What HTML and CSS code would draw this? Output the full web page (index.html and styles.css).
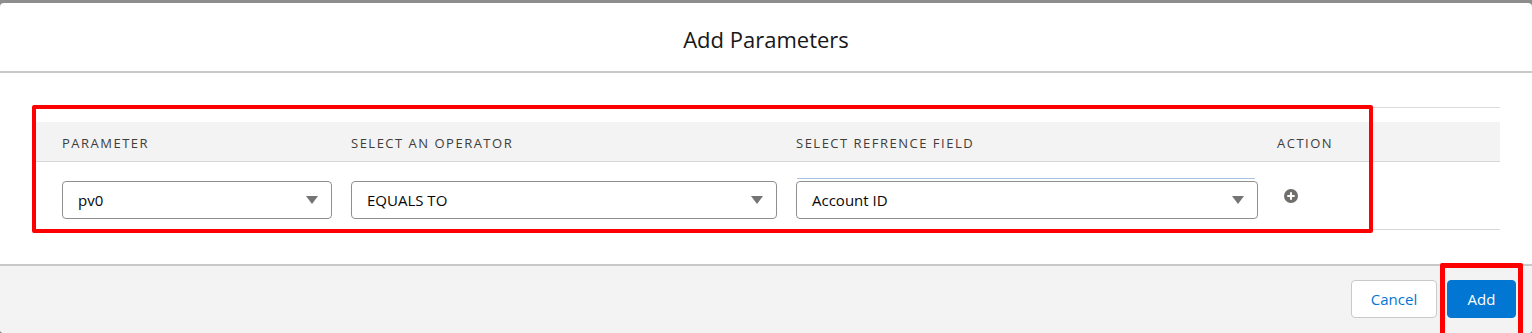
FILE: index.html
```html
<!DOCTYPE html>
<html lang="en">
<head>
    <meta charset="UTF-8">
    <meta name="viewport" content="width=device-width, initial-scale=1.0">
    <title>Add Parameters</title>
    <link rel="stylesheet" href="styles.css">
</head>
<body>
    <div class="modal">
        <div class="modal-header">
            <h2>Add Parameters</h2>
        </div>

        <div class="modal-content">
            <div class="param-table">
                <div class="param-row head">
                    <div class="cell">Parameter</div>
                    <div class="cell">Select an Operator</div>
                    <div class="cell">Select Refrence Field</div>
                    <div class="cell">Action</div>
                </div>
                <div class="param-row body">
                    <div class="field">
                        <div class="select">
                            <span>pv0</span>
                            <svg class="arrow" viewBox="0 0 12 8"><path d="M0 0h12L6 8z"/></svg>
                        </div>
                    </div>
                    <div class="field">
                        <div class="select">
                            <span>EQUALS TO</span>
                            <svg class="arrow" viewBox="0 0 12 8"><path d="M0 0h12L6 8z"/></svg>
                        </div>
                    </div>
                    <div class="field focused">
                        <div class="select">
                            <span>Account ID</span>
                            <svg class="arrow" viewBox="0 0 12 8"><path d="M0 0h12L6 8z"/></svg>
                        </div>
                    </div>
                    <div class="field action">
                        <button class="add-row" title="Add row">
                            <svg viewBox="0 0 14 14">
                                <circle cx="7" cy="7" r="7" fill="#706e6b"/>
                                <path d="M7 3.3v7.4M3.3 7h7.4" stroke="#fff" stroke-width="2"/>
                            </svg>
                        </button>
                    </div>
                </div>
            </div>
        </div>

        <div class="modal-footer">
            <button class="btn btn-neutral">Cancel</button>
            <button class="btn btn-brand">Add</button>
        </div>
    </div>

    <!-- annotation boxes from the screenshot -->
    <div class="mark mark-table"></div>
    <div class="mark mark-add"></div>
</body>
</html>
```

FILE: styles.css
```css
* {
    box-sizing: border-box;
    margin: 0;
    padding: 0;
}
body {
    font-family: 'Open Sans', 'Noto Sans', Arial, sans-serif;
    color: #181818;
    background-color: #8e8e8e;
    padding-top: 3px;
    height: 333px;
    overflow: hidden;
}
.modal {
    background-color: #fff;
    border-radius: 4px;
    height: 330px;
    overflow: hidden;
    display: flex;
    flex-direction: column;
}
.modal-header {
    height: 70px;
    border-bottom: 2px solid #c9c9c9;
    display: flex;
    align-items: center;
    justify-content: center;
}
.modal-header h2 {
    font-size: 22px;
    font-weight: 400;
    color: #181818;
    padding-top: 3px;
}
.modal-content {
    height: 191px;
    padding: 34px 32px 0 36px;
}
.param-table {
    border-top: 1px solid #dddbda;
    padding-top: 14px;
}
.param-row {
    display: grid;
    grid-template-columns: 270px 426px 462px 1fr;
    column-gap: 19px;
    padding-left: 26px;
    border-bottom: 1px solid #d8d8d8;
}
.param-row.head {
    height: 40px;
    background-color: #f3f3f3;
    align-items: center;
}
.param-row.head .cell {
    font-size: 13px;
    letter-spacing: 1.5px;
    text-transform: uppercase;
    color: #3e3e3c;
    padding-top: 2px;
}
.param-row.body {
    height: 68px;
    padding-top: 16px;
}
.field {
    padding-top: 3px;
}
.field.focused {
    padding-top: 0;
}
.field.focused::before {
    content: "";
    display: block;
    height: 1px;
    margin: 0 3px 2px 1px;
    background-color: #a9c4e2;
}
.select {
    height: 38px;
    border: 1px solid #8f8f8f;
    border-radius: 4px;
    background-color: #fff;
    display: flex;
    align-items: center;
    justify-content: space-between;
    padding: 0 13px 0 15px;
    font-size: 15px;
    color: #080707;
}
.arrow {
    width: 12px;
    height: 8px;
    fill: #747474;
}
.field.action {
    padding-top: 4px;
}
.add-row {
    border: none;
    background: none;
    width: 28px;
    height: 28px;
    display: flex;
    align-items: center;
    justify-content: center;
    cursor: pointer;
}
.add-row svg {
    width: 14px;
    height: 14px;
}
.modal-footer {
    flex: 1;
    background-color: #f3f3f3;
    border-top: 2px solid #c9c9c9;
    display: flex;
    justify-content: flex-end;
    align-items: flex-start;
    gap: 10px;
    padding: 14px 16px 0 0;
}
.btn {
    height: 38px;
    border-radius: 4px;
    font-family: inherit;
    font-size: 15px;
    cursor: pointer;
}
.btn-neutral {
    width: 86px;
    background-color: #fff;
    border: 1px solid #c9c9c9;
    color: #0176d3;
}
.btn-brand {
    width: 69px;
    background-color: #0176d3;
    border: 1px solid #0176d3;
    color: #fff;
}
.mark {
    position: absolute;
    border: 4px solid #ff0000;
    border-radius: 2px;
}
.mark-table {
    left: 32px;
    top: 105px;
    width: 1341px;
    height: 128px;
}
.mark-add {
    left: 1440px;
    top: 263px;
    width: 83px;
    height: 80px;
    border-width: 5px;
}
```
